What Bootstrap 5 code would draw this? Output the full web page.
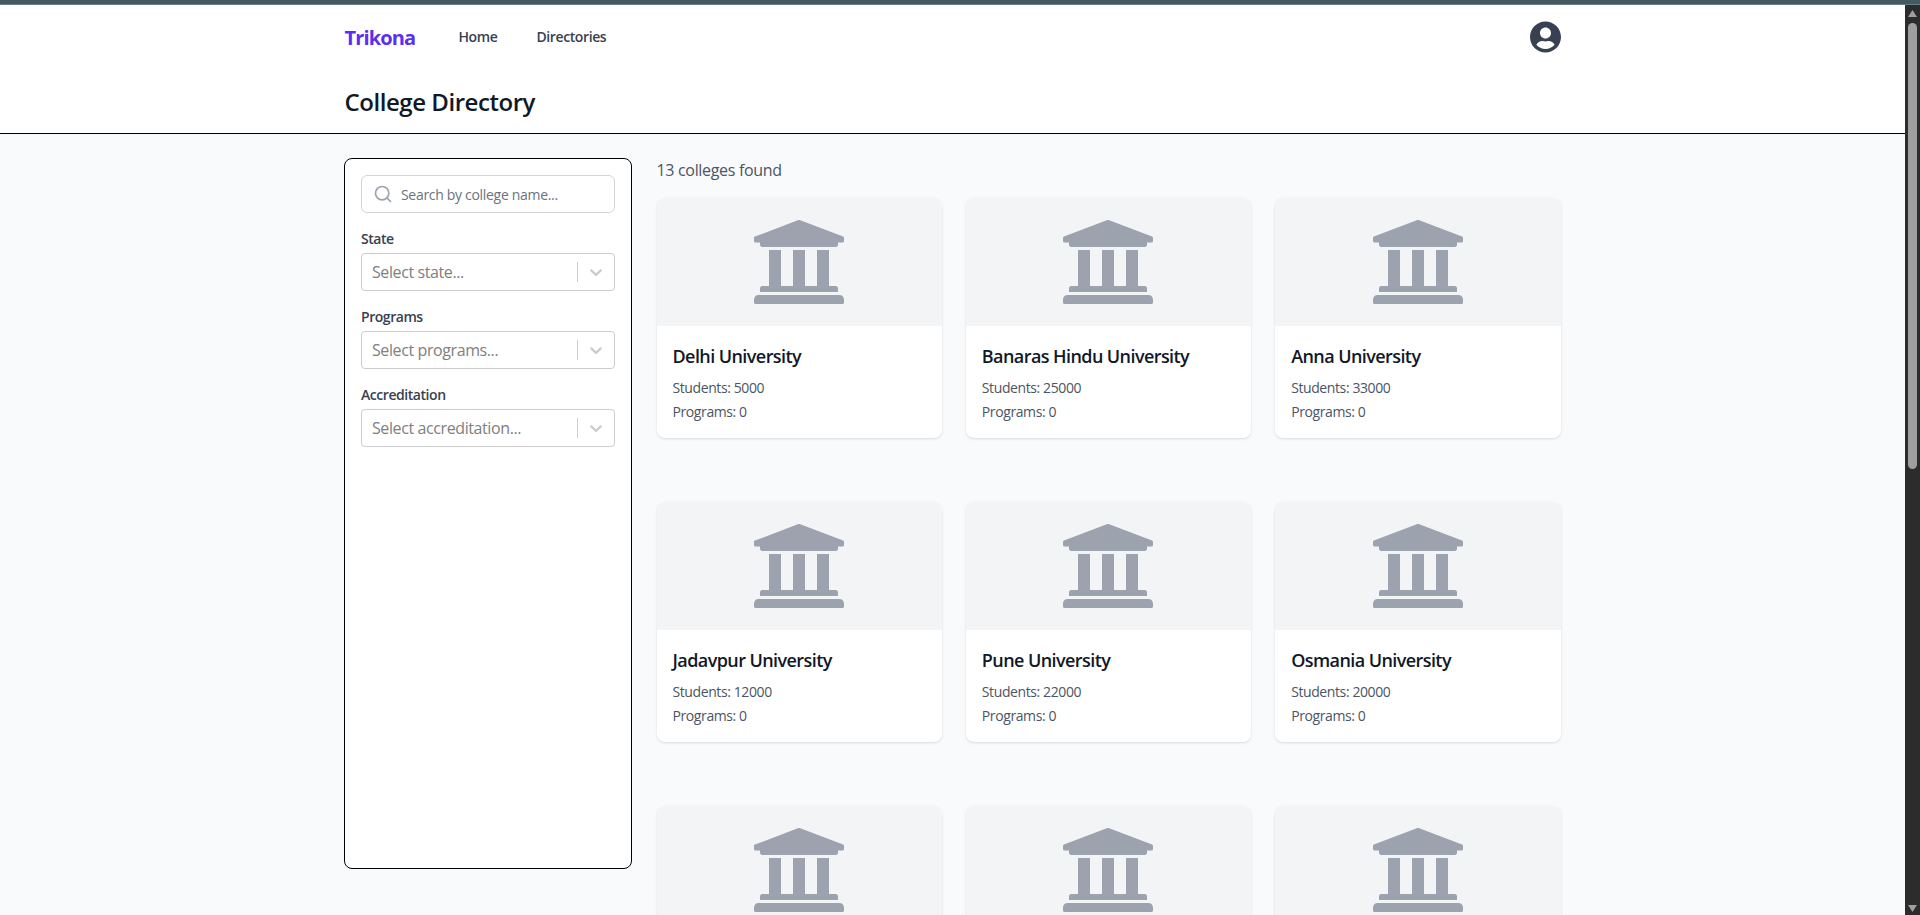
<!DOCTYPE html>
<html lang="en">
<head>
<meta charset="utf-8">
<meta name="viewport" content="width=device-width, initial-scale=1">
<title>College Directory</title>
<link href="https://cdn.jsdelivr.net/npm/bootstrap@5.3.0/dist/css/bootstrap.min.css" rel="stylesheet">
<style>
  body { font-family: "Open Sans", "Noto Sans", sans-serif; background: #f9fafb; color: #111827; height: 100vh; overflow: hidden; }
  .topstrip { height: 5px; background: #455a60; border-bottom: 1px solid #6b7f87; }
  .wrap { width: 1280px; margin: 0 auto; padding: 0 32px; }
  .site-head { border-bottom: 1px solid #000; }
  .nav-row { height: 64px; }
  .brand { font-size: 20px; font-weight: 700; color: #5b2ff0; line-height: 28px; letter-spacing: -.88px; width: 74px; margin-right: 40px; padding-top: 2px; }
  .nav-a { font-size: 14px; font-weight: 600; color: #374151; line-height: 20px; letter-spacing: -.4px; text-decoration: none; white-space: nowrap; }
  .nav-a.first { width: 38px; margin-right: 40px; }
  .page-title { font-size: 24px; line-height: 32px; font-weight: 600; letter-spacing: -.45px; padding: 17px 0 15px; margin: 0; }
  .main-row { gap: 24px; padding-top: 24px; }
  .filters { width: 288px; height: 711px; margin: 0 .5px 0 -.5px; border: 1px solid #000; border-radius: 8px; padding: 16px; gap: 16px; }
  .search-box { height: 38px; border: 1px solid #d1d5db; border-radius: 6px; padding: 0 12px 0 11px; font-size: 14px; color: #6b7280; letter-spacing: -.31px; }
  .flabel { font-size: 14px; line-height: 20px; font-weight: 600; color: #374151; letter-spacing: -.45px; margin-bottom: 4px; }
  .pick { height: 38px; border: 1px solid #ccc; border-radius: 4px; color: #808080; letter-spacing: -.4px; padding-left: 10px; }
  .pick i { width: 1px; height: 20px; background: #ccc; }
  .pick svg { margin: 0 8px; fill: #ccc; }
  .found { line-height: 24px; color: #4b5563; letter-spacing: -.32px; margin: 0 0 16px; }
  .college-grid { display: grid; grid-template-columns: repeat(3, 1fr); column-gap: 24px; row-gap: 64px; }
  .college { border-radius: 8px; height: 240px; box-shadow: 0 1px 3px rgba(0,0,0,.1), 0 1px 2px -1px rgba(0,0,0,.1); }
  .pic { height: 128px; background: #f3f4f6; }
  .pic svg { width: 96px; height: 96px; fill: #9ca3af; }
  .college h2 { font-size: 18px; line-height: 28px; font-weight: 600; letter-spacing: -.58px; margin: 0 0 8px; }
  .college p { font-size: 14px; line-height: 20px; color: #4b5563; letter-spacing: -.4px; margin: 0 0 4px; }
  .sbar { width: 15px; background: #2c2c2c; padding: 5px 3px 3px; }
  .sbar svg { width: 9px; height: 7px; fill: #9f9f9f; }
  .thumb { width: 9px; height: 446px; margin-top: 6px; border-radius: 5px; background: #9f9f9f; }
</style>
</head>
<body class="d-flex flex-column">
<svg class="d-none"><symbol id="bank" viewBox="0 0 512 512"><path d="M496 128v16a8 8 0 0 1-8 8h-24v12c0 6.627-5.373 12-12 12H60c-6.627 0-12-5.373-12-12v-12H24a8 8 0 0 1-8-8v-16a8 8 0 0 1 4.941-7.392l232-88a7.996 7.996 0 0 1 6.118 0l232 88A8 8 0 0 1 496 128zm-24 304H40c-13.255 0-24 10.745-24 24v16a8 8 0 0 0 8 8h464a8 8 0 0 0 8-8v-16c0-13.255-10.745-24-24-24zM96 192v192H60c-6.627 0-12 5.373-12 12v20h416v-20c0-6.627-5.373-12-12-12h-36V192h-64v192h-64V192h-64v192h-64V192H96z"/></symbol>
<symbol id="chev" viewBox="0 0 20 20"><path d="M4.516 7.548c0.436-0.446 1.043-0.481 1.576 0l3.908 3.747 3.908-3.747c0.533-0.481 1.141-0.446 1.574 0 0.436 0.445 0.408 1.197 0 1.615-0.406 0.418-4.695 4.502-4.695 4.502-0.217 0.223-0.502 0.335-0.787 0.335s-0.57-0.112-0.789-0.335c0 0-4.287-4.084-4.695-4.502s-0.436-1.17 0-1.615z"/></symbol></svg>
<div class="topstrip flex-shrink-0"></div>
<div class="d-flex flex-grow-1 overflow-hidden">
  <div class="flex-grow-1 overflow-hidden">
    <header class="site-head bg-white">
      <div class="wrap">
        <nav class="nav-row d-flex align-items-center">
          <div class="brand">Trikona</div>
          <a class="nav-a first" href="#">Home</a>
          <a class="nav-a me-auto" href="#">Directories</a>
          <svg width="31" height="32" viewBox="0 0 496 512" fill="#374151"><path d="M248 8C111 8 0 119 0 256s111 248 248 248 248-111 248-248S385 8 248 8zm0 96c48.6 0 88 39.4 88 88s-39.4 88-88 88-88-39.4-88-88 39.4-88 88-88zm0 344c-58.7 0-111.3-26.6-146.5-68.2 18.8-35.4 55.6-59.8 98.5-59.8 2.4 0 4.8.4 7.1 1.1 13 4.2 26.6 6.9 40.9 6.9 14.3 0 28-2.7 40.9-6.9 2.3-.7 4.7-1.1 7.1-1.1 42.9 0 79.7 24.4 98.5 59.8C359.3 421.4 306.7 448 248 448z"/></svg>
        </nav>
        <h1 class="page-title">College Directory</h1>
      </div>
    </header>
    <main class="wrap d-flex main-row">
      <aside class="filters bg-white d-flex flex-column flex-shrink-0">
        <div class="search-box d-flex align-items-center">
          <svg class="me-2" width="20" height="20" viewBox="0 0 24 24" fill="none" stroke="#9ca3af" stroke-width="2" stroke-linecap="round"><circle cx="11" cy="11" r="8"/><path d="M21 21l-4.35-4.35"/></svg>
          <span>Search by college name...</span>
        </div>
        <div id="picks"></div>
      </aside>
      <section class="flex-grow-1">
        <p class="found">13 colleges found</p>
        <div class="college-grid" id="grid"></div>
      </section>
    </main>
  </div>
  <div class="sbar flex-shrink-0 d-flex flex-column">
    <svg viewBox="0 0 9 7"><path d="M4.5 0 9 7H0z"/></svg>
    <div class="thumb"></div>
    <svg class="mt-auto" viewBox="0 0 9 7"><path d="M4.5 7 9 0H0z"/></svg>
  </div>
</div>
<script src="https://cdn.jsdelivr.net/npm/bootstrap@5.3.0/dist/js/bootstrap.bundle.min.js"></script>
<script>
  const colleges = [['Delhi University', 5000], ['Banaras Hindu University', 25000], ['Anna University', 33000],
    ['Jadavpur University', 12000], ['Pune University', 22000], ['Osmania University', 20000], null, null, null];
  document.getElementById('grid').innerHTML = colleges.map(c => `<article class="college bg-white overflow-hidden">
    <div class="pic d-flex align-items-center justify-content-center"><svg><use href="#bank"/></svg></div>
    ${c ? `<div class="p-3"><h2>${c[0]}</h2><p>Students: ${c[1]}</p><p>Programs: 0</p></div>` : ''}</article>`).join('');
  document.getElementById('picks').innerHTML = ['State', 'Programs', 'Accreditation'].map(l => `<div class="mb-3">
    <div class="flabel">${l}</div>
    <div class="pick d-flex align-items-center"><span class="me-auto">Select ${l.toLowerCase()}...</span><i></i><svg width="20" height="20"><use href="#chev"/></svg></div></div>`).join('');
</script>
</body>
</html>
